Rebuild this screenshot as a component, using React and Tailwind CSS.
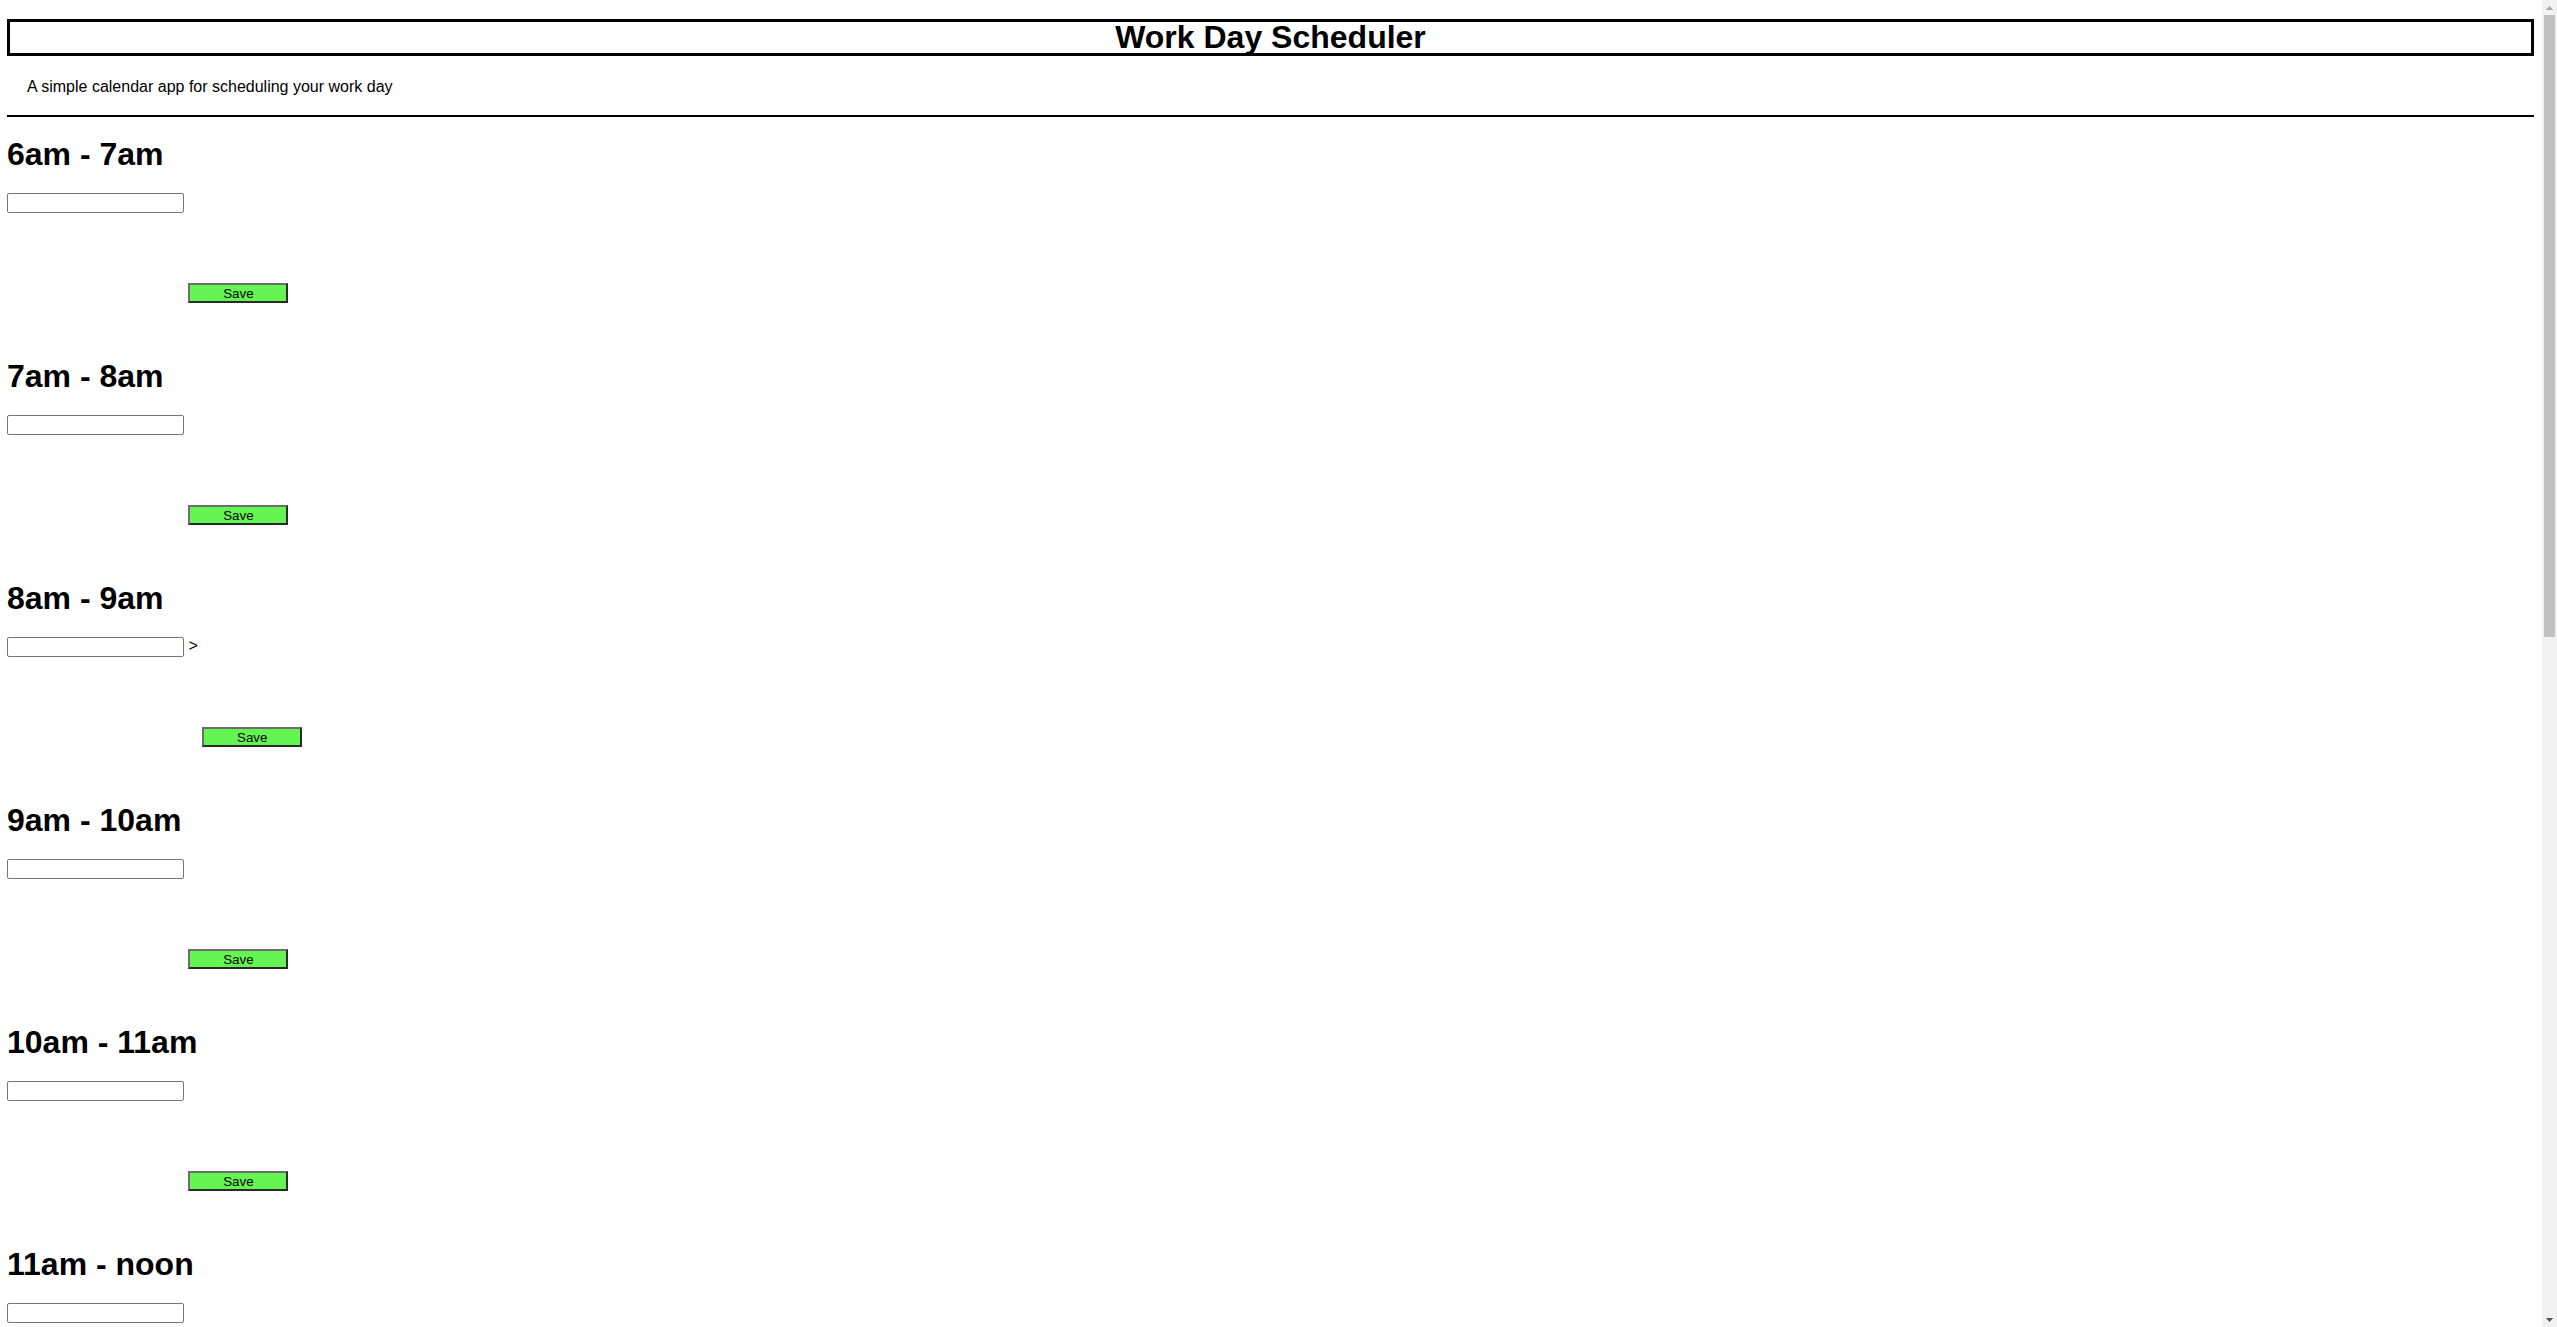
import React from 'react';

const hours = [
  '6am - 7am',
  '7am - 8am',
  '8am - 9am',
  '9am - 10am',
  '10am - 11am',
  '11am - noon',
  'noon - 1pm',
  '1pm - 2pm',
  '2pm - 3pm',
  '3pm - 4pm',
  '4pm - 5pm',
  '5pm - 6pm',
];

function HourBlock({ label, arrow }) {
  return (
    <div>
      <h1 className="text-[32px] font-bold leading-[normal]">{label}</h1>
      <div className="flex items-start mt-[20px]">
        <input
          type="text"
          defaultValue=""
          className="w-[177px] h-[20.5px] border border-[#767676] rounded-[2px] bg-white px-[2px] text-[13.33px] outline-none"
        />
        {arrow && <span className="ml-[4.45px] text-[16px] leading-[normal]">&gt;</span>}
        <button
          type="button"
          className="ml-[4.45px] mt-[90px] w-[100px] h-[20.5px] bg-[#64f553] border-2 border-t-[#6e6e6e] border-l-[#6e6e6e] border-b-[#2a2a2a] border-r-[#2a2a2a] text-[13.33px] leading-[normal] text-black text-center p-0"
        >
          Save
        </button>
      </div>
    </div>
  );
}

// the page's vertical scrollbar, as the browser draws it
function Scrollbar() {
  return (
    <div className="w-[15px] shrink-0 bg-[#f1f1f1] flex flex-col">
      <div className="h-[15px] flex items-center justify-center">
        <svg width="7" height="4" viewBox="0 0 7 4">
          <polygon points="0,4 3.5,0 7,4" fill="#a3a3a3" />
        </svg>
      </div>
      <div className="mx-[2px] h-[622px] bg-[#c1c1c1]" />
      <div className="flex-1" />
      <div className="h-[15px] flex items-center justify-center">
        <svg width="7" height="4" viewBox="0 0 7 4">
          <polygon points="0,0 7,0 3.5,4" fill="#505050" />
        </svg>
      </div>
    </div>
  );
}

export default function App() {
  return (
    <div className="flex h-screen overflow-hidden bg-white text-black font-['Liberation_Sans',Arial,sans-serif]">
      <div className="flex-1 min-w-0 overflow-hidden pl-[7px] pr-[8px] pt-[19px]">
        {/* Header */}
        <header>
          <h1 className="h-[37px] border-[3px] border-black text-center text-[32px] font-bold leading-[31px]">
            Work Day Scheduler
          </h1>
          <p className="mt-[21.8px] pl-[20px] text-[16px] leading-[normal]">
            A simple calendar app for scheduling your work day
          </p>
          <hr className="mt-[19px] h-[2px] border-0 bg-black" />
        </header>

        {/* Time blocks */}
        <main className="mt-[19px] flex flex-col gap-[54.5px]">
          {hours.map((h, i) => (
            <HourBlock key={h} label={h} arrow={i === 2} />
          ))}
        </main>
      </div>
      <Scrollbar />
    </div>
  );
}
